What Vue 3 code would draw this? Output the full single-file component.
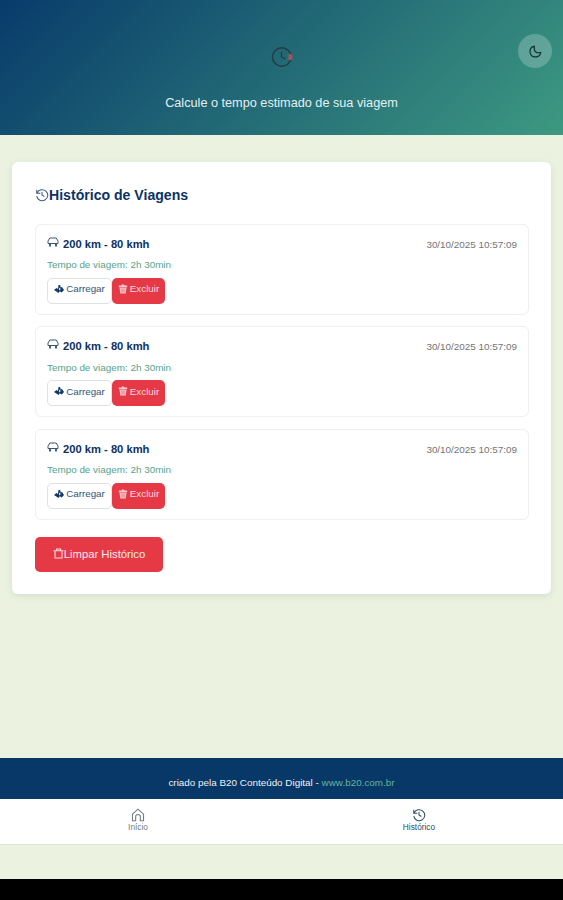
<template>
  <div class="app">
    <header class="header">
      <svg class="logo" viewBox="0 0 22 22" fill="none">
        <circle cx="10.8" cy="11" r="9.300" stroke="#263b43" stroke-width="1.5" />
        <path d="M10.500 6v5l4 2" stroke="#263b43" stroke-width="1.2" />
        <path d="M19 7.500L21.300 9v4L19 14.500 17.300 13V9.500z" fill="#a9525a" />
      </svg>
      <p class="subtitle">Calcule o tempo estimado de sua viagem</p>
      <button class="theme-toggle" aria-label="Alternar tema">
        <svg width="13" height="13" viewBox="0 0 16 16" fill="none" stroke="#15393a" stroke-width="1.6" stroke-linejoin="round">
          <path d="M6.500 1.500A6.700 6.700 0 1 0 14.500 9.500L9.500 9.500L6.800 7z" />
        </svg>
      </button>
    </header>

    <main class="main">
      <section class="card">
        <h2 class="card-title">
          <svg class="title-icon" viewBox="0 0 24 24">
            <path d="M3 3v6h6M3.500 9a9.500 9.500 0 1 1-.5 5M12 7v5l4 2.500" />
          </svg>
          <span>Histórico de Viagens</span>
        </h2>

        <div v-for="trip in trips" :key="trip.id" class="trip">
          <div class="trip-header">
            <div class="trip-route">
              <svg class="car" viewBox="0 0 12 11" fill="none" stroke="#3d5875">
                <path d="M1 6.500V4L2.800 1h6.400L11 4v2.500z" stroke-width="1" />
                <path d="M3 6.500v3M9 6.500v3" stroke-width="1.900" />
              </svg>
              <span>{{ trip.distance }} km - {{ trip.speed }} kmh</span>
            </div>
            <span class="trip-date">{{ trip.date }}</span>
          </div>
          <p class="trip-time">Tempo de viagem: {{ trip.duration }}</p>
          <div class="trip-actions">
            <button class="btn btn-load">
              <svg width="10" height="10" viewBox="0 0 10 10" fill="#123a64">
                <path d="M0 6l2.500-2 1.500 1L4.500.8l2 .7v2L8 3l2 3-2.300 2.500-1.900-1.300L4.500 9 2.300 7.500z" />
                <path d="M5 3.500v3L7 5z" fill="#d8e1e8" />
              </svg>
              <span>Carregar</span>
            </button>
            <button class="btn btn-delete">
              <svg width="10" height="10" viewBox="0 0 10 10" fill="#f8c9cc">
                <path d="M.8 1.500h2.700L4 .6h2l.5.9h2.700v1.700H.8zM1.500 3.700h7L7.700 9.500H2.300z" />
                <path d="M4 4.500v4M6 4.500v4" stroke="#e63946" stroke-width=".6" />
              </svg>
              <span>Excluir</span>
            </button>
          </div>
        </div>

        <button class="btn-clear">
          <svg width="11" height="11" viewBox="0 0 11 11" fill="none" stroke="#fbdcde" stroke-width="1.100">
            <path d="M.5 2.800h10M3.500 2.800V1h4v1.800M2 2.800V10h7V2.800" />
          </svg>
          <span>Limpar Histórico</span>
        </button>
      </section>
    </main>

    <footer class="footer">
      <span class="credit">criado pela B20 Conteúdo Digital - </span><a class="site">www.b20.com.br</a>
    </footer>

    <nav class="nav">
      <a class="nav-item">
        <svg class="nav-icon" viewBox="0 0 24 24">
          <path d="M2.500 10.500L12 2l9.500 8.500V22H16v-7a4 4 0 0 0-8 0v7H2.500z" />
        </svg>
        <span>Início</span>
      </a>
      <a class="nav-item active">
        <svg class="nav-icon" viewBox="0 0 24 24">
          <path d="M3 3v6h6M3.500 9a9.500 9.500 0 1 1-.5 5M12 7v5l4 2.500" />
        </svg>
        <span>Histórico</span>
      </a>
    </nav>
    <div class="spacer"></div>
    <div class="system-bar"></div>
  </div>
</template>

<script setup>
import { ref } from 'vue'

const trips = ref([
  { id: 1, distance: 200, speed: 80, duration: '2h 30min', date: '30/10/2025 10:57:09' },
  { id: 2, distance: 200, speed: 80, duration: '2h 30min', date: '30/10/2025 10:57:09' },
  { id: 3, distance: 200, speed: 80, duration: '2h 30min', date: '30/10/2025 10:57:09' }
])
</script>

<style>
body {
  margin: 0;
  background: #ebf3e0;
}
</style>

<style scoped>
.app {
  display: flex;
  flex-direction: column;
  height: 900px;
  overflow: hidden;
  background: #ebf3e0;
  font-family: 'Liberation Sans', Arial, sans-serif;
  color: #0d3263;
}

.app * {
  box-sizing: border-box;
}

button {
  font-family: inherit;
  cursor: pointer;
}

svg {
  flex: none;
}

.header {
  position: relative;
  flex: none;
  display: flex;
  flex-direction: column;
  align-items: center;
  height: 135px;
  padding-top: 46px;
  background: linear-gradient(135deg, #083b6b 0%, #3d9981 100%);
}

.logo {
  width: 22px;
  height: 22px;
}

.subtitle {
  margin: 27px 0 0;
  font-size: 12.7px;
  line-height: 16px;
  color: #e3eff0;
}

.theme-toggle {
  position: absolute;
  top: 34px;
  right: 11px;
  display: flex;
  align-items: center;
  justify-content: center;
  width: 34px;
  height: 34px;
  padding: 0;
  border: none;
  border-radius: 50%;
  background: rgba(255, 255, 255, 0.22);
}

.main {
  flex: 1;
  padding: 27px 12px 0;
}

.card {
  height: 432px;
  padding: 24px 22px 0 23px;
  border-radius: 6px;
  background: #fff;
  box-shadow: 0 2px 7px rgba(40, 80, 60, 0.12);
}

.card-title {
  display: flex;
  align-items: center;
  margin: 0 0 19.8px;
  font-size: 14.1px;
  line-height: 18px;
}

.title-icon,
.nav-icon {
  width: 14px;
  height: 14px;
  fill: none;
  stroke: currentColor;
  stroke-width: 1.8;
}

.title-icon {
  opacity: 0.8;
}

.trip {
  height: 91px;
  margin-bottom: 11.6px;
  padding: 11px 11px 0;
  border: 1px solid #edf0f0;
  border-radius: 6px;
}

.trip-header {
  display: flex;
  justify-content: space-between;
  height: 17px;
  line-height: 17px;
}

.trip-route {
  display: flex;
  gap: 4px;
  font-size: 11.2px;
  font-weight: 700;
}

.car {
  width: 12px;
  height: 11px;
  margin-top: 1px;
}

.trip-date {
  font-size: 9.9px;
  color: #727476;
}

.trip-time {
  margin: 5.4px 0 6.6px;
  font-size: 9.9px;
  line-height: 13px;
  color: #55a38c;
}

.trip-actions {
  display: flex;
}

.btn {
  display: flex;
  align-items: center;
  justify-content: center;
  gap: 2px;
  height: 26px;
  padding: 0 0 4px;
  border-radius: 5px;
  font-size: 9.8px;
}

.btn-load {
  width: 65px;
  border: 1px solid #dde2e5;
  background: #fff;
  color: #345574;
}

.btn-delete {
  width: 53px;
  border: none;
  background: #e63946;
  color: #fbdcde;
}

.btn-clear {
  display: flex;
  align-items: center;
  justify-content: center;
  width: 128px;
  height: 35px;
  margin-top: 17px;
  padding: 0 0 1px;
  border: none;
  border-radius: 5px;
  background: #e63946;
  color: #fdecec;
  font-size: 11.3px;
}

.footer {
  flex: none;
  height: 41px;
  padding-top: 18px;
  background: #083867;
  color: #edf2f5;
  font-size: 9.9px;
  line-height: 14px;
  text-align: center;
  white-space: pre;
}

.site {
  color: #65b69d;
}

.nav {
  flex: none;
  display: flex;
  height: 46px;
  border-bottom: 1px solid #dfe5d9;
  background: #fff;
}

.nav-item {
  flex: 1;
  display: flex;
  flex-direction: column;
  align-items: center;
  padding: 9px 5px 0 0;
  color: #747c80;
  font-size: 8.3px;
  line-height: 11px;
}

.nav-item.active {
  padding: 9px 6px 0 0;
  color: #294e65;
}

.spacer {
  flex: none;
  height: 34px;
}

.system-bar {
  flex: none;
  height: 21px;
  background: #000;
}
</style>
